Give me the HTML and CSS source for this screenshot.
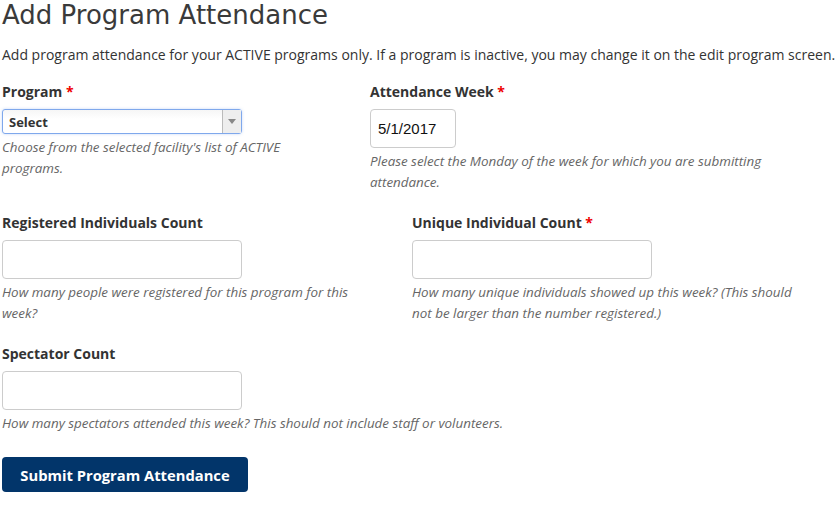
FILE: index.html
```html
<!DOCTYPE html>
<html>
<head>
<meta charset="utf-8">
<link rel="stylesheet" href="styles.css">
</head>
<body>
<div class="page">
  <h1 class="title">Add Program Attendance</h1>
  <p class="intro">Add program attendance for your ACTIVE programs only. If a program is inactive, you may change it on the edit program screen.</p>

  <div class="row">
    <div class="group g-program">
      <label class="label">Program <span class="req">*</span></label>
      <div class="select">
        <span class="select-text">Select</span>
        <span class="select-arrow"><svg width="8" height="5" viewBox="0 0 8 5"><path d="M0 0h8L4 5z" fill="#888"/></svg></span>
      </div>
      <p class="help">Choose from the selected facility's list of ACTIVE programs.</p>
    </div>
    <div class="group g-week">
      <label class="label">Attendance Week <span class="req">*</span></label>
      <div class="input date">5/1/2017</div>
      <p class="help">Please select the Monday of the week for which you are submitting attendance.</p>
    </div>
  </div>

  <div class="row row2">
    <div class="group g-reg">
      <label class="label">Registered Individuals Count</label>
      <div class="input wide"></div>
      <p class="help">How many people were registered for this program for this week?</p>
    </div>
    <div class="group g-unique">
      <label class="label">Unique Individual Count <span class="req">*</span></label>
      <div class="input wide"></div>
      <p class="help">How many unique individuals showed up this week? (This should not be larger than the number registered.)</p>
    </div>
  </div>

  <div class="group">
    <label class="label">Spectator Count</label>
    <div class="input wide"></div>
    <p class="help">How many spectators attended this week? This should not include staff or volunteers.</p>
  </div>

  <button class="btn">Submit Program Attendance</button>
</div>
</body>
</html>
```
FILE: styles.css
```css
html, body {
  margin: 0;
  padding: 0;
  background: #fff;
}
.page {
  padding: 0 0 0 2px;
  font-family: "Open Sans", sans-serif;
  color: #333;
}
.title {
  margin: 0;
  font-family: "DejaVu Sans", sans-serif;
  font-weight: normal;
  font-size: 26px;
  line-height: 30px;
  color: #3a3a3a;
}
.intro {
  margin: 15px 0 17px;
  font-size: 14px;
  line-height: 20px;
  color: #333;
}
.row {
  display: flex;
}
.g-program { width: 300px; margin-right: 68px; }
.g-week { width: 400px; }
.g-reg { width: 380px; margin-right: 30px; }
.g-unique { width: 400px; }
.group {
  margin-bottom: 20px;
}
.label {
  display: block;
  font-size: 14px;
  font-weight: bold;
  line-height: 20px;
  margin-bottom: 7px;
  color: #333;
}
.req { color: #e00; }
.select {
  box-sizing: border-box;
  width: 240px;
  height: 25px;
  border: 1px solid #7fa8ec;
  border-radius: 3px;
  display: flex;
  box-shadow: 0 0 3px rgba(90, 140, 230, 0.35);
  background: linear-gradient(#f6f6f6, #fff 40%);
}
.select-text {
  flex: 1;
  font-size: 13px;
  font-weight: bold;
  line-height: 23px;
  padding: 1px 0 0 6px;
  color: #333;
}
.select-arrow {
  width: 18px;
  border-left: 1px solid #bbb;
  background: #eee;
  display: flex;
  align-items: center;
  justify-content: center;
}
.input {
  box-sizing: border-box;
  height: 39px;
  border: 1px solid #ccc;
  border-radius: 4px;
  background: #fff;
}
.wide { width: 240px; }
.date {
  width: 86px;
  font-family: "Liberation Sans", Arial, sans-serif;
  font-size: 15px;
  line-height: 37px;
  padding-left: 7px;
  color: #111;
}
.help {
  margin: 3px 0 0;
  font-size: 13.4px;
  font-style: italic;
  line-height: 21px;
  color: #666;
}
.btn {
  margin-top: 3px;
  height: 35px;
  width: 246px;
  border: none;
  border-radius: 4px;
  background: #02356a;
  color: #fff;
  font-family: "Open Sans", sans-serif;
  font-weight: bold;
  font-size: 14.75px;
  padding: 0;
}
```
